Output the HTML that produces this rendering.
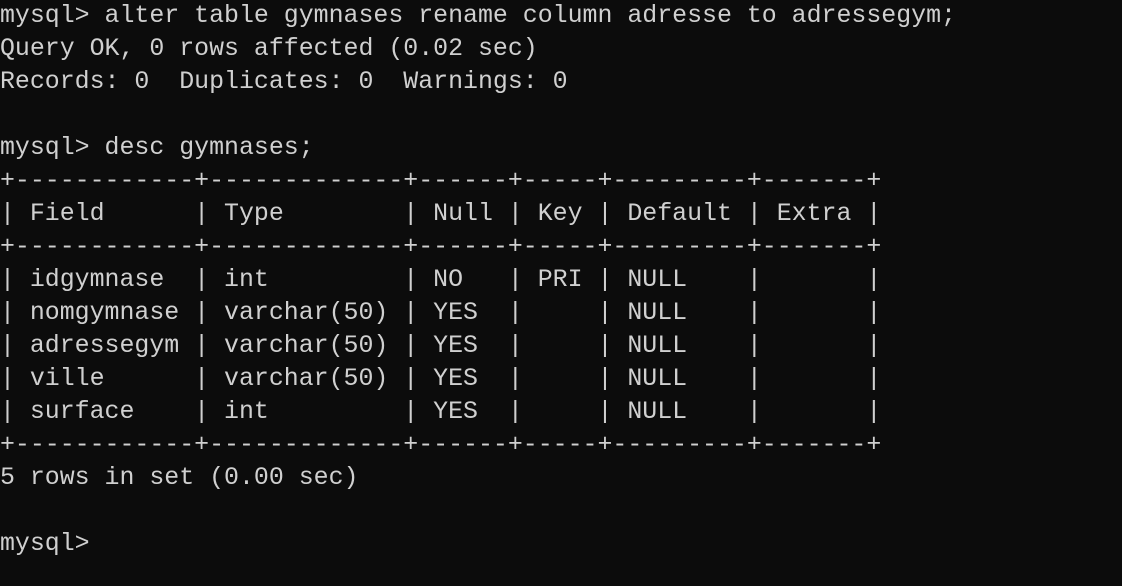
<!DOCTYPE html>
<html><head><meta charset="utf-8"><style>
html,body{margin:0;padding:0;background:#0c0c0c;width:1122px;height:586px;overflow:hidden}
pre{margin:0;position:absolute;left:0;top:0px;font-family:"Liberation Mono",monospace;font-size:24.9px;line-height:33px;color:#d0d0d0;white-space:pre}
</style></head><body><pre>mysql&gt; alter table gymnases rename column adresse to adressegym;
Query OK, 0 rows affected (0.02 sec)
Records: 0  Duplicates: 0  Warnings: 0

mysql&gt; desc gymnases;
+------------+-------------+------+-----+---------+-------+
| Field      | Type        | Null | Key | Default | Extra |
+------------+-------------+------+-----+---------+-------+
| idgymnase  | int         | NO   | PRI | NULL    |       |
| nomgymnase | varchar(50) | YES  |     | NULL    |       |
| adressegym | varchar(50) | YES  |     | NULL    |       |
| ville      | varchar(50) | YES  |     | NULL    |       |
| surface    | int         | YES  |     | NULL    |       |
+------------+-------------+------+-----+---------+-------+
5 rows in set (0.00 sec)

mysql&gt;</pre></body></html>
